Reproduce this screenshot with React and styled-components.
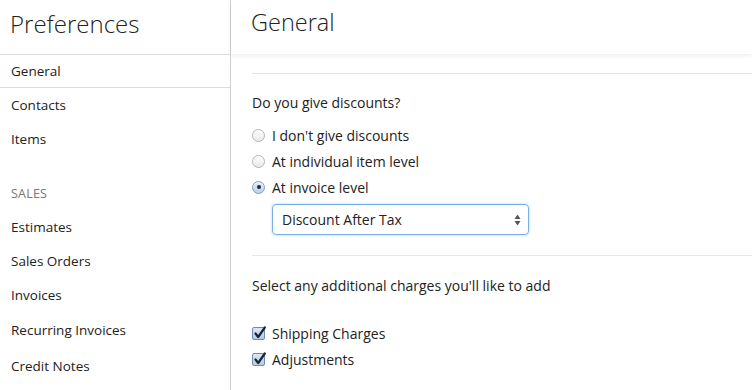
import React, { useState } from 'react';
import styled, { createGlobalStyle } from 'styled-components';

const GlobalStyle = createGlobalStyle`
  html, body {
    margin: 0;
    padding: 0;
    background: #fff;
    font-family: 'Open Sans', 'Liberation Sans', sans-serif;
    color: #222;
    overflow: hidden;
  }
`;

const Layout = styled.div`
  display: flex;
  width: 752px;
  height: 390px;
  overflow: hidden;
`;

const Sidebar = styled.aside`
  width: 230px;
  flex-shrink: 0;
  border-right: 1px solid #cfcfcf;
  display: flex;
  flex-direction: column;
`;

const SideTitle = styled.h1`
  margin: 0;
  height: 55px;
  box-sizing: border-box;
  padding: 7px 0 0 10px;
  font-size: 24px;
  font-weight: 300;
  color: #222;
  border-bottom: 1px solid #dcdcdc;
`;

const NavItem = styled.div`
  height: ${(p) => p.h || 34}px;
  display: flex;
  align-items: center;
  padding-left: 11px;
  font-size: 13.5px;
  color: #222;
  box-sizing: border-box;
  border-bottom: ${(p) => (p.active ? '1px solid #dcdcdc' : 'none')};
  cursor: pointer;
`;

const SectionLabel = styled.div`
  height: 34px;
  margin-top: 20px;
  display: flex;
  align-items: center;
  padding-left: 11px;
  font-size: 12.5px;
  color: #777;
  letter-spacing: 0.2px;
`;

const Main = styled.main`
  flex: 1;
  display: flex;
  flex-direction: column;
  min-width: 0;
`;

const Header = styled.header`
  height: 54px;
  box-sizing: border-box;
  padding: 6px 0 0 20px;
  box-shadow: 0 2px 4px rgba(0, 0, 0, 0.07);
  position: relative;
  z-index: 1;
`;

const HeaderTitle = styled.h2`
  margin: 0;
  font-size: 23.5px;
  font-weight: 300;
  color: #222;
`;

const Content = styled.div`
  padding: 19px 0 0 21px;
`;

const Rule = styled.hr`
  margin: 0;
  border: none;
  border-top: 1px solid #e6e6e6;
`;

const Question = styled.p`
  margin: ${(p) => p.top}px 0 ${(p) => p.bottom}px;
  font-size: 14px;
  line-height: 18px;
`;

const OptionList = styled.div`
  display: flex;
  flex-direction: column;
`;

const OptionRow = styled.label`
  height: 26px;
  display: flex;
  align-items: center;
  gap: 7px;
  font-size: 14px;
  cursor: pointer;
`;

const RadioDot = styled.span`
  width: 13px;
  height: 13px;
  box-sizing: border-box;
  border-radius: 50%;
  border: 1px solid ${(p) => (p.checked ? '#7e9ec4' : '#b4b4b4')};
  background: ${(p) =>
    p.checked
      ? 'linear-gradient(#dfeaf8, #b9d1f0)'
      : 'linear-gradient(#ffffff, #e9e9e9)'};
  box-shadow: inset 0 1px 1px rgba(255, 255, 255, 0.8);
  display: flex;
  align-items: center;
  justify-content: center;
  &::after {
    content: '';
    width: 4px;
    height: 4px;
    border-radius: 50%;
    background: #1d2b3d;
    display: ${(p) => (p.checked ? 'block' : 'none')};
  }
`;

const SelectBox = styled.div`
  margin: 4px 0 20px 20px;
  width: 257px;
  height: 31px;
  box-sizing: border-box;
  border: 1px solid #78aee8;
  border-radius: 4px;
  box-shadow: 0 0 3px rgba(90, 160, 235, 0.45);
  display: flex;
  align-items: center;
  justify-content: space-between;
  padding: 0 6px 0 9px;
  font-size: 14px;
  color: #222;
`;

const CheckBox = styled.span`
  width: 13px;
  height: 13px;
  box-sizing: border-box;
  border: 1px solid #6d8db6;
  border-radius: 2px;
  background: linear-gradient(#dbe7f7, #b3cbe9);
  position: relative;
  display: inline-block;
  svg {
    position: absolute;
    left: 0px;
    top: -3px;
  }
`;

const Arrows = () => (
  <svg width="9" height="14" viewBox="0 0 9 14">
    <path d="M4.5 1.5 L7.5 6 L1.5 6 Z" fill="#555" />
    <path d="M4.5 12.5 L7.5 8 L1.5 8 Z" fill="#555" />
  </svg>
);

const Tick = () => (
  <svg width="14" height="15" viewBox="0 0 14 15">
    <path
      d="M2.5 8.5 L5.2 12 L11.8 2.5"
      fill="none"
      stroke="#1c2533"
      strokeWidth="2.2"
      strokeLinecap="round"
      strokeLinejoin="round"
    />
  </svg>
);

const discountOptions = [
  "I don't give discounts",
  'At individual item level',
  'At invoice level',
];

const charges = ['Shipping Charges', 'Adjustments'];

const App = () => {
  const [discount, setDiscount] = useState(2);

  return (
    <>
      <GlobalStyle />
      <Layout>
        <Sidebar>
          <SideTitle>Preferences</SideTitle>
          <NavItem active h={33}>General</NavItem>
          <NavItem>Contacts</NavItem>
          <NavItem>Items</NavItem>
          <SectionLabel>SALES</SectionLabel>
          <NavItem>Estimates</NavItem>
          <NavItem>Sales Orders</NavItem>
          <NavItem>Invoices</NavItem>
          <NavItem h={36}>Recurring Invoices</NavItem>
          <NavItem h={36}>Credit Notes</NavItem>
        </Sidebar>

        <Main>
          <Header>
            <HeaderTitle>General</HeaderTitle>
          </Header>
          <Content>
            <Rule />
            <Question top={20} bottom={10}>Do you give discounts?</Question>
            <OptionList>
              {discountOptions.map((label, i) => (
                <OptionRow key={label} onClick={() => setDiscount(i)}>
                  <RadioDot checked={discount === i} />
                  {label}
                </OptionRow>
              ))}
            </OptionList>
            <SelectBox>
              <span>Discount After Tax</span>
              <Arrows />
            </SelectBox>
            <Rule />
            <Question top={21} bottom={25}>
              Select any additional charges you'll like to add
            </Question>
            <OptionList>
              {charges.map((label) => (
                <OptionRow key={label}>
                  <CheckBox>
                    <Tick />
                  </CheckBox>
                  {label}
                </OptionRow>
              ))}
            </OptionList>
          </Content>
        </Main>
      </Layout>
    </>
  );
};

export default App;
